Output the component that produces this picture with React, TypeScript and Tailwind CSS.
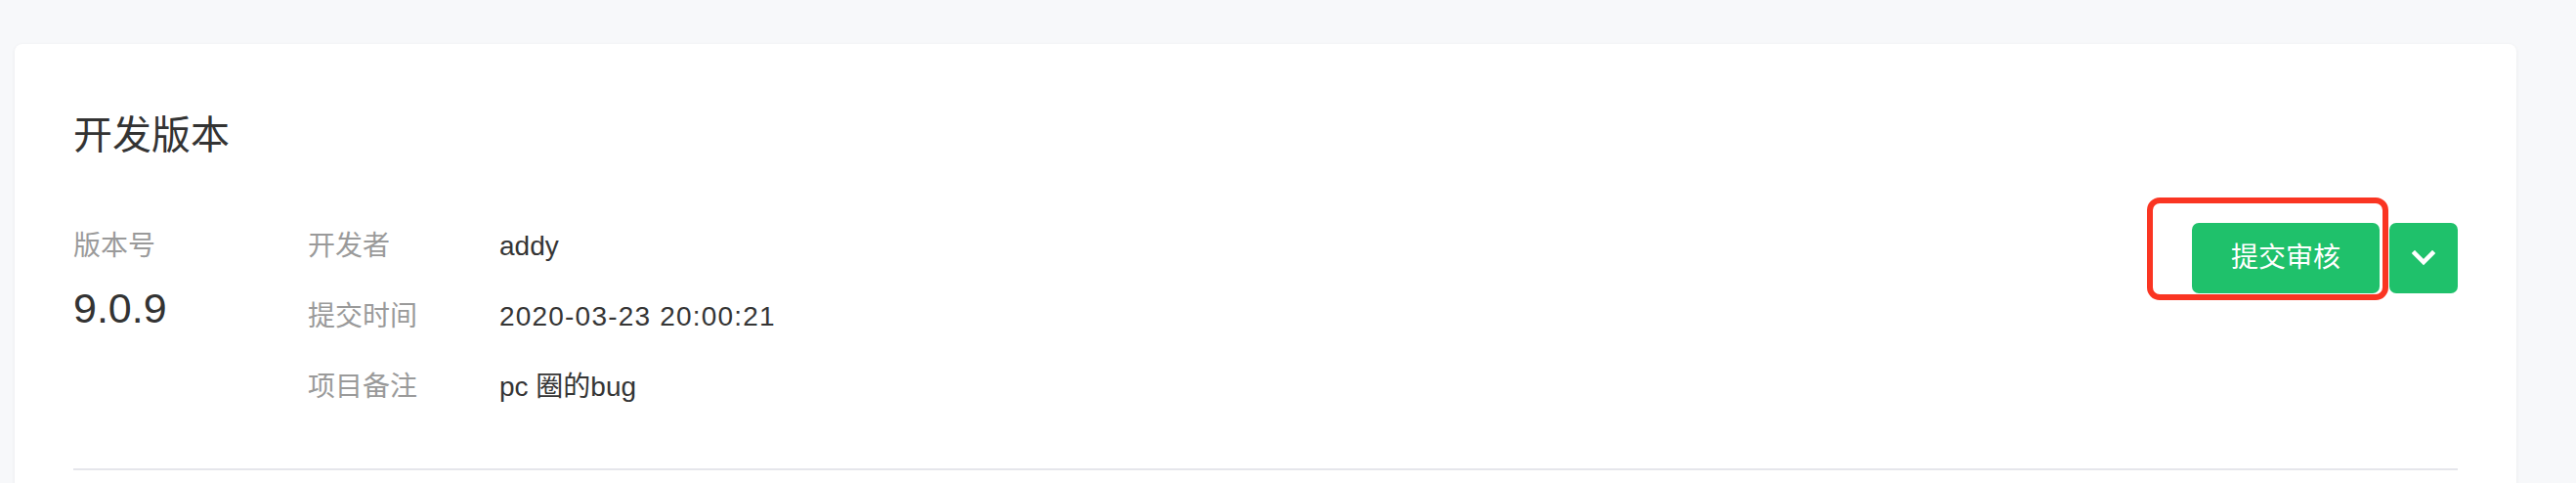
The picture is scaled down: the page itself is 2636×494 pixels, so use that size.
import { useState } from 'react'

type Row = {
  label: string
  value: string
  tracking?: boolean
}

const rows: Row[] = [
  { label: '开发者', value: 'addy' },
  { label: '提交时间', value: '2020-03-23 20:00:21', tracking: true },
  { label: '项目备注', value: 'pc 圈的bug' },
]

export default function App() {
  const [open, setOpen] = useState(false)

  return (
    <div className="bg-[#f7f8fa] pt-[45px] pl-[15px] pr-[61px] font-['Liberation_Sans','Noto_Sans_CJK_SC',sans-serif]">
      <div className="bg-white rounded-[8px] shadow-[0_1px_4px_rgba(0,0,0,0.06)] px-[60px] pt-[65px] pb-[60px]">
        <h2 className="text-[40px] leading-[56px] font-normal text-[#333333]">开发版本</h2>

        <div className="flex mt-[50px]">
          {/* Version */}
          <div className="w-[240px] shrink-0">
            <p className="text-[28px] leading-[72px] text-[#9a9a9a]">版本号</p>
            <p className="mt-[6px] text-[43px] leading-[42px] text-[#333333]">9.0.9</p>
          </div>

          {/* Details */}
          <div className="flex-1">
            {rows.map(({ label, value, tracking }) => (
              <div key={label} className="flex h-[72px] items-center text-[28px] leading-[72px]">
                <span className="w-[196px] shrink-0 text-[#9a9a9a]">{label}</span>
                <span className={`text-[#353535] ${tracking ? 'tracking-[1.2px]' : ''}`}>{value}</span>
              </div>
            ))}
          </div>

          {/* Actions */}
          <div className="flex items-start gap-[10px] pt-[12px] shrink-0">
            <div className="relative">
              <button className="w-[192px] h-[72px] rounded-[7px] bg-[#1fc16b] text-white text-[28px] leading-none">
                提交审核
              </button>
              <div className="absolute -left-[46px] -top-[26px] w-[247px] h-[105px] border-[6px] border-[#fa3522] rounded-[13px] pointer-events-none" />
            </div>
            <button
              onClick={() => setOpen(!open)}
              className="w-[70px] h-[72px] rounded-[7px] bg-[#1fc16b] flex items-center justify-center"
            >
              <svg width="24" height="16" viewBox="0 0 24 16" fill="none">
                <polyline points="3,3 12,12 21,3" stroke="white" strokeWidth="4.5" strokeLinecap="square" />
              </svg>
            </button>
          </div>
        </div>

        <div className="mt-[47px] h-[2px] bg-[#e5e6eb]" />
      </div>
    </div>
  )
}
